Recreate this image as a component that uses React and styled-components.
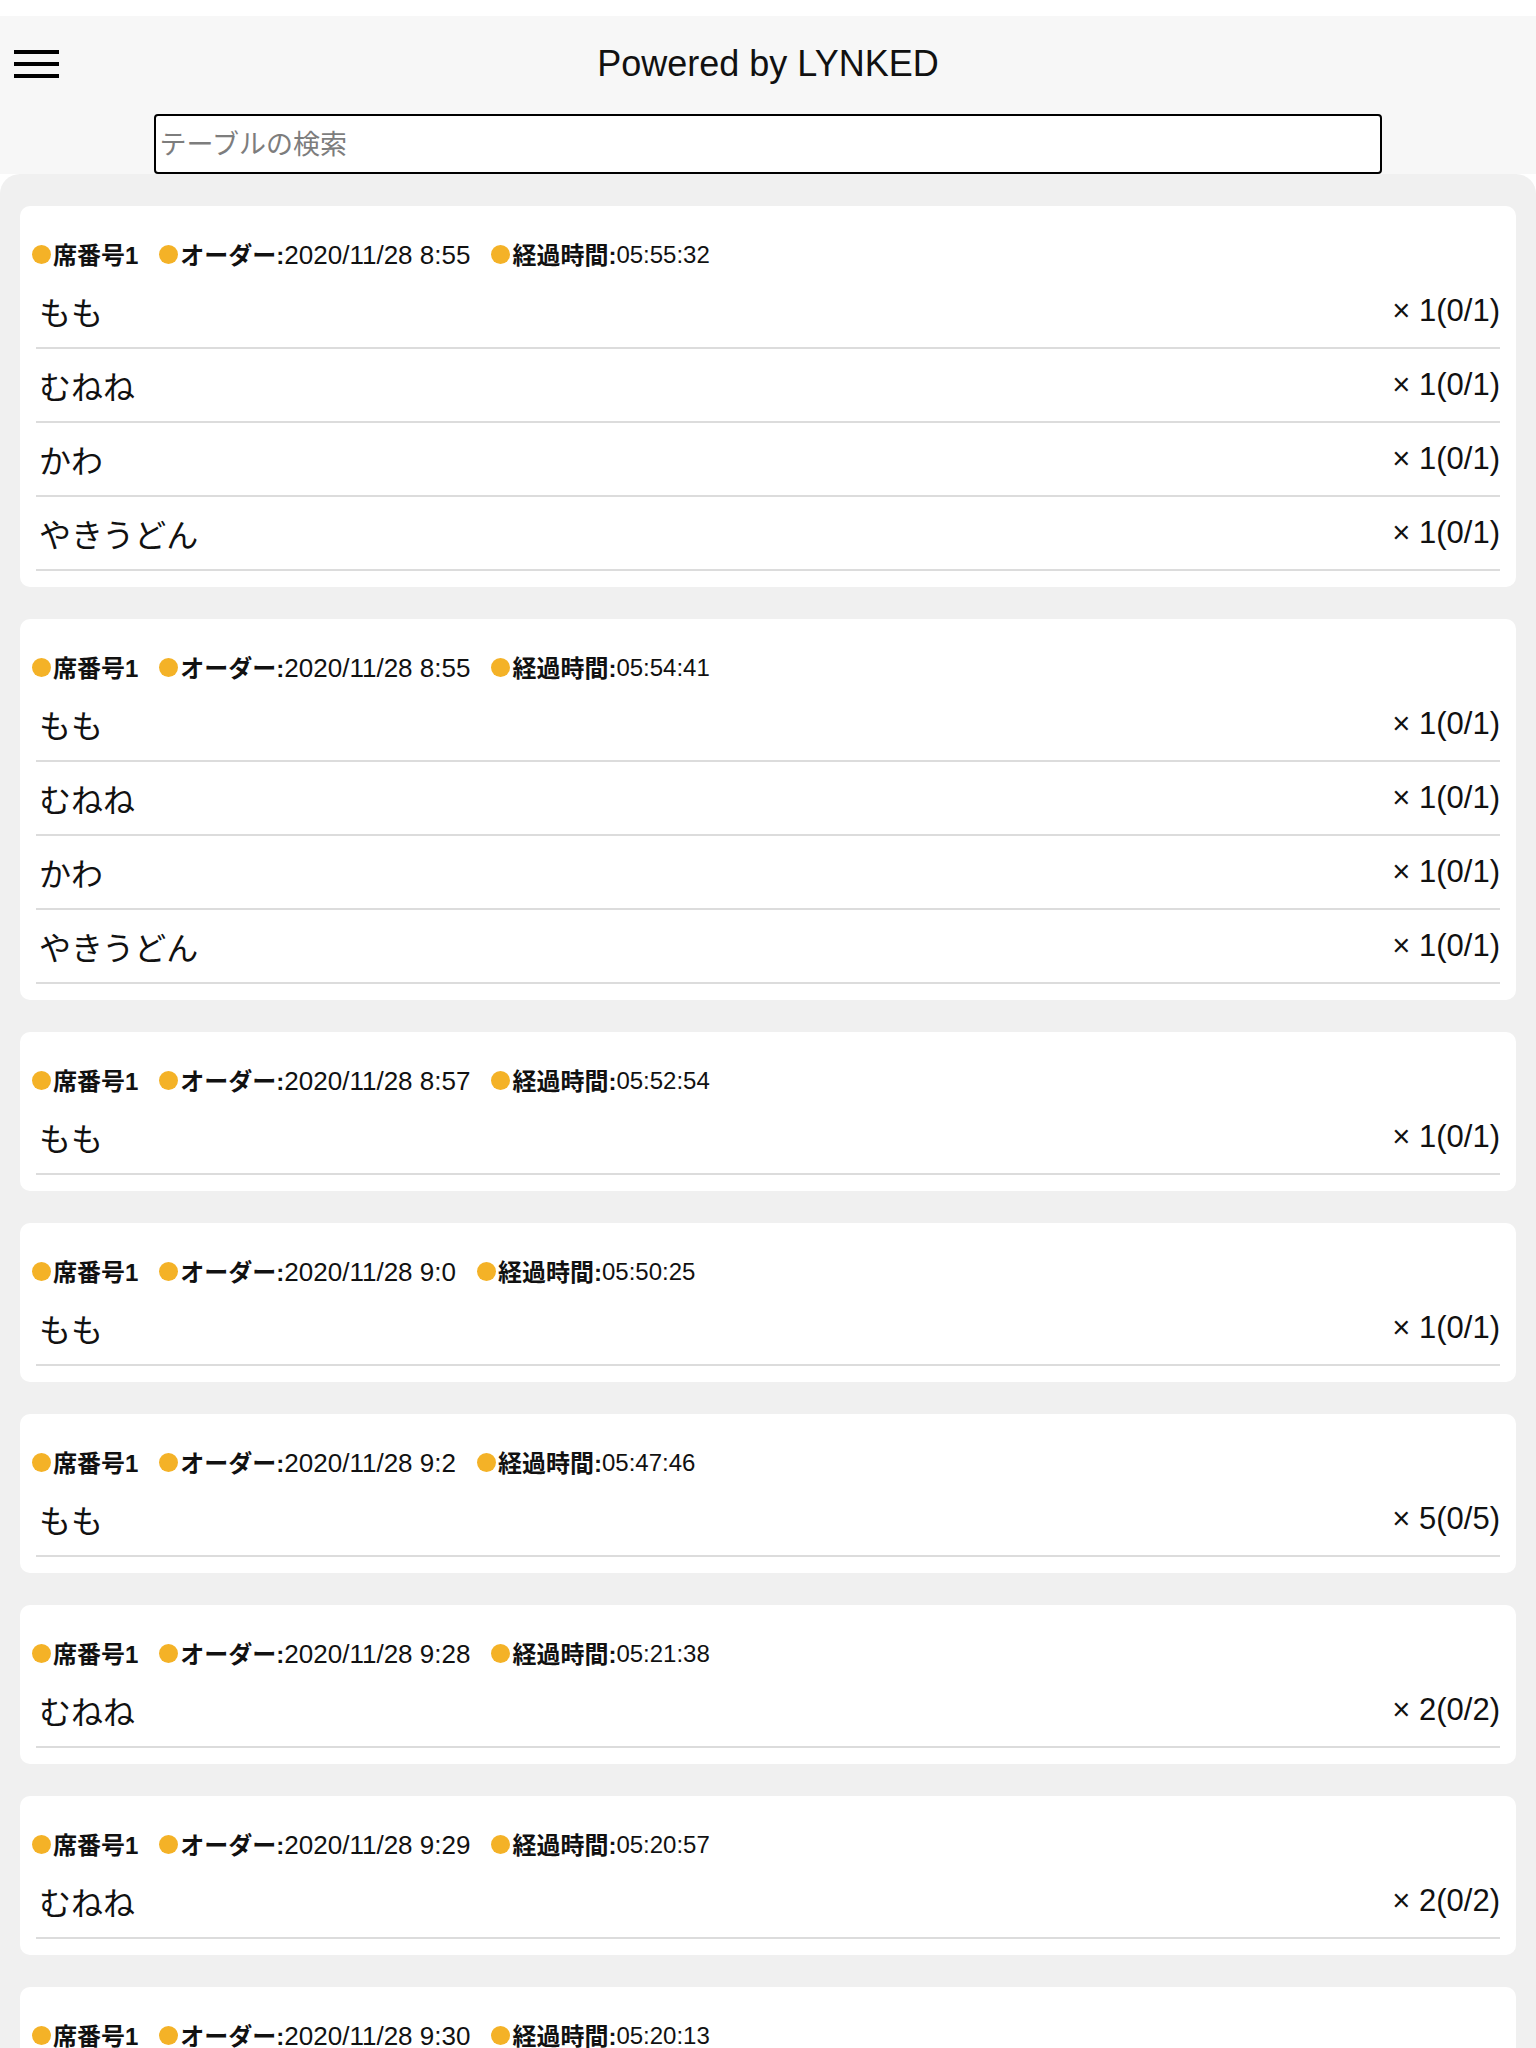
import React from "react";
import styled, { createGlobalStyle } from "styled-components";

const GlobalStyle = createGlobalStyle`
  body {
    margin: 0;
    background: #fff;
    font-family: "Liberation Sans", "Noto Sans CJK JP", sans-serif;
    color: #111;
  }
`;

const Page = styled.div`
  padding-top: 16px;
  background: #fff;
`;

const Header = styled.header`
  background: #f7f7f7;
  display: flex;
  flex-direction: column;
  align-items: center;
`;

const TopBar = styled.div`
  width: 100%;
  height: 96px;
  display: grid;
  grid-template-columns: 1fr auto 1fr;
  align-items: center;
`;

const MenuButton = styled.div`
  width: 45px;
  margin-left: 14px;
  display: flex;
  flex-direction: column;
  gap: 8px;

  span {
    display: block;
    height: 4px;
    background: #000;
  }
`;

const Title = styled.h1`
  margin: 0;
  font-size: 36px;
  font-weight: 400;
  color: #111;
  white-space: nowrap;
`;

const Search = styled.input`
  box-sizing: border-box;
  width: 80%;
  height: 60px;
  margin-top: 2px;
  padding: 2px 4px 0;
  border: 2px solid #000;
  border-radius: 4px;
  background: #fff;
  font-family: "Liberation Sans", "Noto Sans CJK JP", sans-serif;
  font-size: 27px;
  outline: none;

  &::placeholder {
    color: #7d7d7d;
  }
`;

const Content = styled.main`
  background: #f0f0f0;
  border-radius: 20px 20px 0 0;
  padding: 32px 20px;
  display: flex;
  flex-direction: column;
  gap: 32px;
`;

const Card = styled.section`
  background: #fff;
  border-radius: 10px;
  padding: 28px 16px 16px 12px;
`;

const Meta = styled.div`
  display: flex;
  align-items: center;
  gap: 21px;
  height: 38px;
  margin-bottom: 3px;
  font-size: 24px;
  white-space: nowrap;
`;

const MetaItem = styled.span`
  display: flex;
  align-items: center;
`;

const Dot = styled.span`
  width: 19px;
  height: 19px;
  margin: 3px 2px 0 0;
  border-radius: 50%;
  background: #f4b227;
  flex-shrink: 0;
`;

const Label = styled.b`
  font-weight: 700;
`;

const Value = styled.span`
  font-size: ${(p) => p.size || 24}px;
  padding-top: 4px;
`;

const Items = styled.ul`
  list-style: none;
  margin: 0 0 0 4px;
  padding: 0;
`;

const Row = styled.li`
  display: flex;
  justify-content: space-between;
  align-items: center;
  height: 72px;
  padding-left: 3px;
  border-bottom: 2px solid #dcdcdc;
`;

const Name = styled.span`
  font-size: 32px;
`;

const Qty = styled.span`
  font-size: 31px;
`;

const orders = [
  {
    time: "2020/11/28 8:55",
    elapsed: "05:55:32",
    items: [
      ["もも", "× 1(0/1)"],
      ["むねね", "× 1(0/1)"],
      ["かわ", "× 1(0/1)"],
      ["やきうどん", "× 1(0/1)"],
    ],
  },
  {
    time: "2020/11/28 8:55",
    elapsed: "05:54:41",
    items: [
      ["もも", "× 1(0/1)"],
      ["むねね", "× 1(0/1)"],
      ["かわ", "× 1(0/1)"],
      ["やきうどん", "× 1(0/1)"],
    ],
  },
  { time: "2020/11/28 8:57", elapsed: "05:52:54", items: [["もも", "× 1(0/1)"]] },
  { time: "2020/11/28 9:0", elapsed: "05:50:25", items: [["もも", "× 1(0/1)"]] },
  { time: "2020/11/28 9:2", elapsed: "05:47:46", items: [["もも", "× 5(0/5)"]] },
  { time: "2020/11/28 9:28", elapsed: "05:21:38", items: [["むねね", "× 2(0/2)"]] },
  { time: "2020/11/28 9:29", elapsed: "05:20:57", items: [["むねね", "× 2(0/2)"]] },
  { time: "2020/11/28 9:30", elapsed: "05:20:13", items: [["むねね", "× 2(0/2)"]] },
];

function OrderCard({ order }) {
  return (
    <Card>
      <Meta>
        <MetaItem>
          <Dot />
          <Label>席番号1</Label>
        </MetaItem>
        <MetaItem>
          <Dot />
          <Label>オーダー:</Label>
          <Value size={26}>{order.time}</Value>
        </MetaItem>
        <MetaItem>
          <Dot />
          <Label>経過時間:</Label>
          <Value>{order.elapsed}</Value>
        </MetaItem>
      </Meta>
      <Items>
        {order.items.map(([name, qty], i) => (
          <Row key={i}>
            <Name>{name}</Name>
            <Qty>{qty}</Qty>
          </Row>
        ))}
      </Items>
    </Card>
  );
}

export default function App() {
  return (
    <>
      <GlobalStyle />
      <Page>
        <Header>
          <TopBar>
            <MenuButton>
              <span />
              <span />
              <span />
            </MenuButton>
            <Title>Powered by LYNKED</Title>
            <div />
          </TopBar>
          <Search placeholder="テーブルの検索" />
        </Header>
        <Content>
          {orders.map((o, i) => (
            <OrderCard key={i} order={o} />
          ))}
        </Content>
      </Page>
    </>
  );
}
